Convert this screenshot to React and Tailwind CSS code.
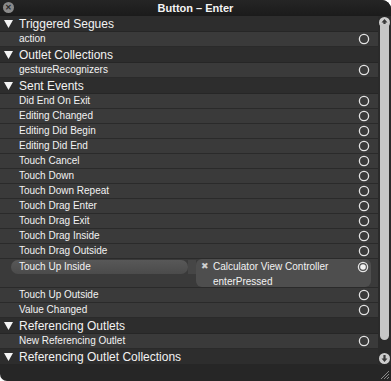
const sections = [
  { title: "Triggered Segues", items: ["action"] },
  { title: "Outlet Collections", items: ["gestureRecognizers"] },
  {
    title: "Sent Events",
    items: [
      "Did End On Exit",
      "Editing Changed",
      "Editing Did Begin",
      "Editing Did End",
      "Touch Cancel",
      "Touch Down",
      "Touch Down Repeat",
      "Touch Drag Enter",
      "Touch Drag Exit",
      "Touch Drag Inside",
      "Touch Drag Outside",
      "Touch Up Inside",
      "Touch Up Outside",
      "Value Changed",
    ],
  },
  { title: "Referencing Outlets", items: ["New Referencing Outlet"] },
  { title: "Referencing Outlet Collections", items: [] },
];

function Ring({ filled }) {
  return (
    <svg width="12" height="12" viewBox="0 0 12 12" className="shrink-0">
      <circle cx="6" cy="6" r="4.6" fill="none" stroke="#e4e4e4" strokeWidth="1.3" />
      {filled && <circle cx="6" cy="6" r="2.8" fill="#f2f2f2" />}
    </svg>
  );
}

function Triangle() {
  return (
    <svg width="9" height="8" viewBox="0 0 9 8" className="shrink-0">
      <polygon points="0,0 9,0 4.5,8" fill="#f4f4f4" />
    </svg>
  );
}

function Header({ title }) {
  return (
    <div className="h-[16px] flex items-center gap-[6px] pl-[4px] bg-[#2d2d2d] border-b border-[#262626] text-[12px] leading-none text-[#f2f2f2]">
      <Triangle />
      <span className="pt-[1px]">{title}</span>
    </div>
  );
}

function Item({ name }) {
  return (
    <div className="h-[15px] flex items-center justify-between pl-[19px] pr-[8px] bg-[#3a3a3a] border-b border-[#2a2a2a] text-[10px] leading-none text-[#f2f2f2]">
      <span>{name}</span>
      <Ring />
    </div>
  );
}

function ConnectedItem({ name }) {
  return (
    <div className="h-[29px] flex items-start pl-[11px] pt-[1px] bg-[#3a3a3a] border-b border-[#2a2a2a] text-[10px] leading-none text-[#f2f2f2]">
      <div className="w-[177px] h-[14px] flex items-center pl-[8px] rounded-full bg-gradient-to-b from-[#585858] to-[#4b4b4b]">
        {name}
      </div>
      <div className="w-[8px] h-[14px] bg-[#464646]" />
      <div className="w-[175px] h-[28px] -mt-[1px] rounded-[6px] bg-[#4e4e4e] flex items-start justify-between pl-[5px] pr-[2px] pt-[1px]">
        <div className="flex items-start gap-[4px]">
          <span className="text-[9px] text-[#cfcfcf] pt-[2px]">✖</span>
          <div className="flex flex-col gap-[5px] pt-[2px]">
            <span>Calculator View Controller</span>
            <span>enterPressed</span>
          </div>
        </div>
        <div className="pt-[1px]">
          <Ring filled />
        </div>
      </div>
    </div>
  );
}

function Arrow({ up }) {
  return (
    <svg width="11" height="11" viewBox="0 0 11 11" className="shrink-0">
      <circle cx="5.5" cy="5.5" r="5.5" fill="#cdcdcd" />
      <polygon
        points={up ? "5.5,2 8.5,5.5 6.6,5.5 6.6,9 4.4,9 4.4,5.5 2.5,5.5" : "5.5,9 8.5,5.5 6.6,5.5 6.6,2 4.4,2 4.4,5.5 2.5,5.5"}
        fill="#3a3a3a"
      />
    </svg>
  );
}

export default function App() {
  return (
    <div className="w-[391px] h-[381px] bg-white">
      <div
        className="w-[391px] h-[381px] flex flex-col overflow-hidden rounded-tr-[9px] rounded-bl-[7px] bg-[#262626]"
        style={{ fontFamily: '"Liberation Sans", Arial, sans-serif' }}
      >
        <div className="h-[16px] shrink-0 relative flex items-center justify-center bg-gradient-to-b from-[#252525] to-[#1b1b1b] text-[11px] font-bold text-[#f4f4f4]">
          <div className="absolute left-[3px] top-[2px] w-[11px] h-[11px] rounded-full bg-[#8a8a8a] flex items-center justify-center text-[8px] leading-none text-[#2b2b2b]">
            ✕
          </div>
          <span className="pt-[1px]">Button – Enter</span>
        </div>

        <div className="h-[349px] flex">
          <div className="flex-1 flex flex-col">
            {sections.map((s) => (
              <div key={s.title}>
                <Header title={s.title} />
                {s.items.map((it) =>
                  it === "Touch Up Inside" ? (
                    <ConnectedItem key={it} name={it} />
                  ) : (
                    <Item key={it} name={it} />
                  )
                )}
              </div>
            ))}
          </div>
          <div className="w-[13px] flex flex-col items-center bg-[#2a2a2a] pt-[1px] pb-[1px]">
            <div className="w-[9px] flex-1 flex flex-col items-center">
              <Arrow up />
              <div className="w-[9px] flex-1 -mt-[4px] rounded-b-full bg-[#c6c6c6] mb-[13px]" />
              <Arrow />
            </div>
          </div>
        </div>

        <div className="flex-1 flex justify-end items-end pr-[1px] pb-[1px]">
          <svg width="10" height="10" viewBox="0 0 10 10">
            <line x1="1" y1="9" x2="9" y2="1" stroke="#8a8a8a" strokeWidth="1" />
            <line x1="4" y1="9" x2="9" y2="4" stroke="#8a8a8a" strokeWidth="1" />
            <line x1="7" y1="9" x2="9" y2="7" stroke="#8a8a8a" strokeWidth="1" />
          </svg>
        </div>
      </div>
    </div>
  );
}
